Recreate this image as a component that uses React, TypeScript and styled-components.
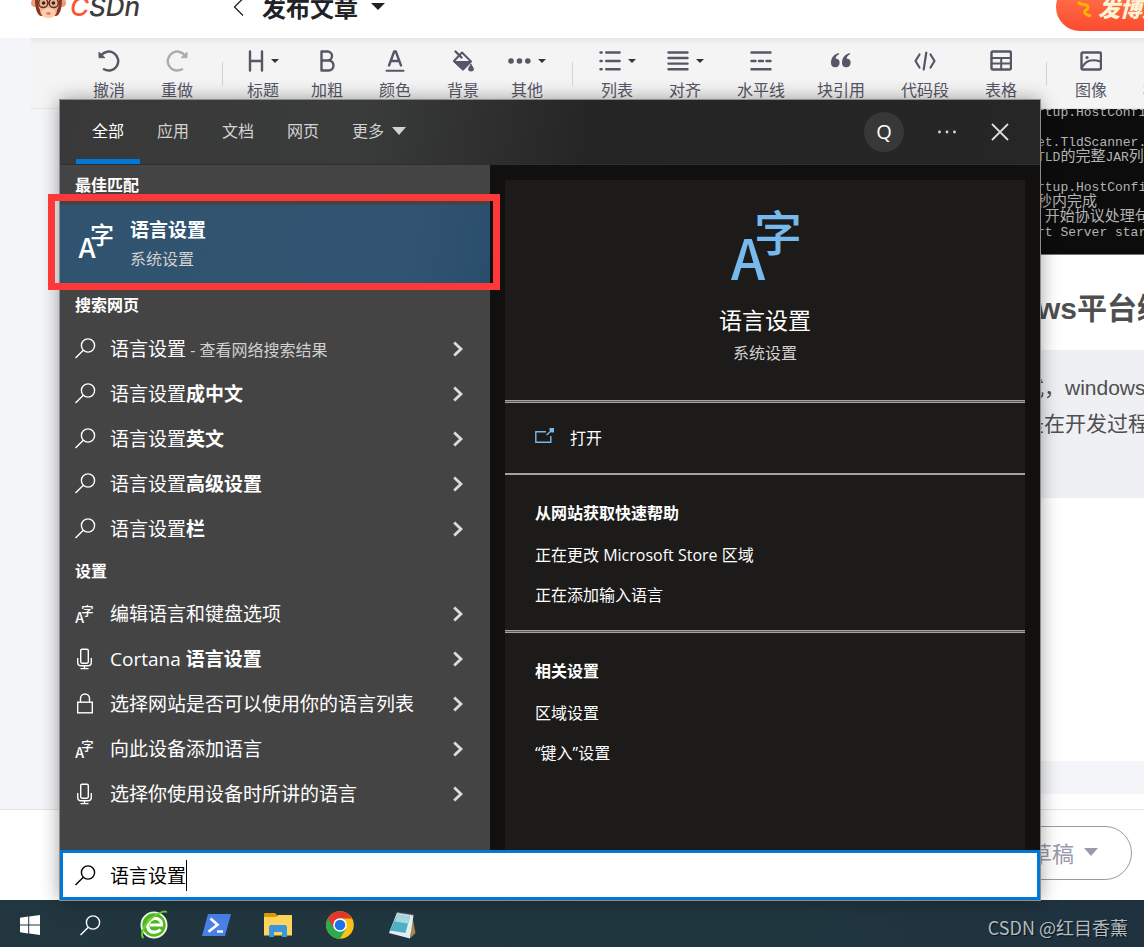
import React from "react";
import styled, { createGlobalStyle } from "styled-components";

const cjk = `"Noto Sans CJK SC", sans-serif`;
const ui = `"Open Sans", ${cjk}`;
const arial = `"Liberation Sans", ${cjk}`;

const GlobalStyle = createGlobalStyle`
  *, *::before, *::after { box-sizing: border-box; }
  body { margin: 0; font-family: ${ui}; background: #f4f5f8; }
  button { font: inherit; color: inherit; background: none; border: 0; padding: 0; margin: 0; text-align: left; cursor: pointer; }
  ul { list-style: none; margin: 0; padding: 0; }
  h1, h2, h3, p { margin: 0; }
  svg { display: block; flex: none; }
`;

/* ---------- page behind the search flyout ---------- */

const Desktop = styled.div`
  position: relative;
  display: flex;
  flex-direction: column;
  min-height: 100vh;
  overflow: hidden;
`;

const SiteHeader = styled.header`
  display: flex;
  align-items: center;
  height: 38px;
  padding: 0 0 25px 31px;
  background: #fff;
  overflow: hidden;
  flex: none;
`;

const Logo = styled.a`
  display: flex;
  align-items: center;
  gap: 4px;
  width: 202px;
  color: #3c3c3c;
  font: italic 500 26px/32px Inter, ${cjk};
  text-decoration: none;
`;

const LogoAccent = styled.span`
  color: #fc5531;
`;

const TitleMenu = styled.button`
  display: flex;
  align-items: center;
  gap: 13px;
  color: #222226;
  font: 700 24px/32px ${cjk};
`;

const BackButton = styled.button`
  width: 29px;
`;

const PromoButton = styled.button`
  display: flex;
  align-items: center;
  gap: 4px;
  flex: none;
  width: 160px;
  height: 48px;
  margin: 0 -72px 0 auto;
  padding-left: 20px;
  border-radius: 24px;
  background: linear-gradient(#ff7a4d, #fc4b30);
  color: #fff3d6;
  font: italic 900 22px/32px ${cjk};
  white-space: nowrap;
`;

const ToolbarRow = styled.div`
  margin-left: 31px;
  padding-left: 44px;
  height: 71px;
  display: flex;
  background: #f4f4f4;
  border-bottom: 1px solid #e4e5e8;
  box-shadow: inset 0 6px 6px -5px #dcdcdc;
  overflow: hidden;
  flex: none;
`;

const Tool = styled.button<{ $w: number; $off?: boolean }>`
  display: flex;
  flex-direction: column;
  align-items: center;
  flex: none;
  width: ${(p) => p.$w}px;
  padding-top: 11px;
  color: #555666;
  font: 400 16px/24px ${cjk};
  white-space: nowrap;
  svg { opacity: ${(p) => (p.$off ? 0.45 : 1)}; }
`;

const ToolIcon = styled.span`
  display: flex;
  align-items: center;
  gap: 7px;
  height: 24px;
  margin-bottom: 4px;
`;

const ToolDivider = styled.span<{ $w: number }>`
  display: flex;
  justify-content: center;
  flex: none;
  width: ${(p) => p.$w}px;
  padding-top: 24px;
  &::before { content: ""; width: 1px; height: 24px; background: #d4d4d6; }
`;

const Workspace = styled.main`
  flex: 1;
  display: flex;
  justify-content: flex-end;
`;

const Article = styled.article`
  display: flex;
  flex-direction: column;
  width: 121px;
  overflow: hidden;
  white-space: nowrap;
  background: #fff;
  color: #4f4f4f;
`;

const Console = styled.pre`
  margin: 0;
  height: 146px;
  padding-left: 14px;
  overflow: hidden;
  background: #0c0c0c;
  border-bottom: 1px solid #767676;
  color: #b4b4b4;
  font: 400 15px/15px "Liberation Mono", ${cjk};
`;

const ConsoleLine = styled.span<{ $first?: boolean }>`
  display: block;
  height: 15px;
  margin-top: ${(p) => (p.$first ? -4 : 0)}px;
`;

const Ascii = styled.span`
  font-size: 13px;
`;

const ArticleTitle = styled.h1`
  padding: 34px 0 21px 14px;
  font: 700 30px/40px ${arial};
`;

const Quote = styled.blockquote`
  margin: 0;
  height: 148px;
  padding: 20px 0;
  background: #eef0f4;
  font: 400 21px/36px ${arial};
`;

const StatusStrip = styled.div`
  margin-top: auto;
  height: 48px;
  border-bottom: 15px solid #fff;
  background: #f4f5f8;
`;

const PublishBar = styled.footer`
  display: flex;
  align-items: flex-start;
  justify-content: flex-end;
  height: 91px;
  padding: 16px 12px;
  background: #fff;
  border-top: 1px solid #e4e4e6;
  flex: none;
`;

const DraftButton = styled.button`
  display: flex;
  align-items: center;
  justify-content: flex-end;
  gap: 10px;
  width: 160px;
  height: 54px;
  padding: 0 33px 3px 0;
  border: 1px solid #999aaa;
  border-radius: 27px;
  color: #999aaa;
  font: 400 22px/32px ${cjk};
`;

/* ---------- search flyout ---------- */

const Flyout = styled.section`
  position: absolute;
  top: 100px;
  right: 104px;
  bottom: 47px;
  left: 60px;
  display: flex;
  flex-direction: column;
  background: #11100f;
  box-shadow: 0 0 0 1px #8d8d8d, 0 0 18px rgba(0, 0, 0, 0.4);
  color: #fff;
`;

const FlyoutHeader = styled.header`
  display: flex;
  align-items: center;
  height: 65px;
  padding: 0 30px 0 16px;
  background: linear-gradient(100deg, #393939 0, #3a3b3b 300px, #252525 530px, #262626 100%);
  border-bottom: 1px solid #303030;
  flex: none;
`;

const Tabs = styled.nav`
  display: flex;
  gap: 1px;
  align-self: stretch;
  flex: 1;
`;

const Tab = styled.button<{ $active?: boolean }>`
  display: flex;
  align-items: center;
  gap: 8px;
  padding: 2px 16px 0;
  border-bottom: 5px solid ${(p) => (p.$active ? "#0078d7" : "transparent")};
  color: ${(p) => (p.$active ? "#fff" : "#d2d2d2")};
  font-size: 16px;
  line-height: 24px;
`;

const Avatar = styled.button`
  width: 40px;
  height: 40px;
  border-radius: 50%;
  background: #383838;
  font-size: 20px;
  line-height: 40px;
  text-align: center;
`;

const HeaderButton = styled.button`
  display: grid;
  place-items: center;
  width: 20px;
  height: 40px;
  margin-left: 33px;
`;

const Columns = styled.div`
  display: flex;
  flex: 1;
  min-height: 0;
`;

const Results = styled.div`
  width: 430px;
  flex: none;
  background: #444;
`;

const GroupTitle = styled.h2`
  padding-left: 15px;
  font: 700 16px/40px ${ui};
`;

const BestMatch = styled.button`
  position: relative;
  display: flex;
  align-items: flex-start;
  gap: 17px;
  width: 100%;
  height: 80px;
  padding: 11px 0 0 18px;
  background: linear-gradient(100deg, #30536f 0, #315472 80%, #294e6c 100%);
`;

const MatchIcon = styled.span`
  padding-top: 7px;
`;

const Highlight = styled.span`
  position: absolute;
  inset: -11px -10px -5px -12px;
  border: 7px solid #fd3838;
`;

const MatchTitle = styled.span`
  display: block;
  margin-bottom: 3px;
  font: 700 19px/28px ${ui};
`;

const Muted = styled.span`
  color: #d0d0d0;
  font: 400 16px/24px ${ui};
`;

const ResultList = styled.ul`
  &:first-of-type { padding-top: 1px; }
`;

const Result = styled.button`
  display: flex;
  align-items: center;
  width: 100%;
  height: 45px;
  padding: 0 27px 0 15px;
  font: 400 19px/28px ${ui};
`;

const ResultIcon = styled.span`
  width: 35px;
`;

const ResultText = styled.span`
  flex: 1;
  white-space: pre;
`;

const Detail = styled.div`
  flex: 1;
  margin: 15px 15px 0;
  background: #1c1b1a;
`;

const Hero = styled.div`
  display: flex;
  flex-direction: column;
  align-items: center;
  height: 220px;
  padding-top: 30px;
`;

const HeroTitle = styled.h2`
  margin: 22px 0 3px;
  font: 400 23px/36px ${ui};
`;

const Rule = styled.hr<{ $double?: boolean }>`
  margin: 0;
  border: solid #a3a3a0;
  border-width: 1px 0;
  height: ${(p) => (p.$double ? 3 : 2)}px;
  background: #5c5c5a;
`;

const OpenAction = styled.button`
  display: flex;
  align-items: center;
  gap: 15px;
  width: 100%;
  height: 70px;
  padding-left: 30px;
  font-size: 16px;
  line-height: 24px;
`;

const LinkGroup = styled.section`
  padding: 26px 30px 15px;
`;

const LinkGroupTitle = styled.h3`
  margin-bottom: 10px;
  font: 700 16px/24px ${ui};
`;

const DetailLink = styled.a`
  display: block;
  color: #fff;
  font-size: 16px;
  line-height: 40px;
  text-decoration: none;
`;

const SearchBox = styled.label`
  display: flex;
  align-items: center;
  height: 50px;
  padding-left: 12px;
  border: 3px solid #0078d7;
  background: #fff;
  color: #000;
  flex: none;
`;

const SearchInput = styled.input`
  field-sizing: content;
  height: 32px;
  margin-left: 14px;
  padding: 0;
  border: 0;
  outline: 0;
  color: #000;
  font: 400 19px/28px ${ui};
`;

const Caret = styled.span`
  width: 1px;
  height: 31px;
  background: #000;
`;

/* ---------- taskbar ---------- */

const Taskbar = styled.nav`
  display: flex;
  height: 47px;
  background: linear-gradient(90deg, #21363f 0, #20363f 70%, #1f313f 100%);
  color: #fff;
  flex: none;
`;

const TaskButton = styled.button<{ $app?: boolean }>`
  display: grid;
  place-items: center;
  width: ${(p) => (p.$app ? 62 : 60)}px;
  padding-top: 3px;
`;

const Apps = styled.div`
  display: flex;
  margin-left: 3px;
`;

const Signature = styled.p`
  margin-left: auto;
  padding: 13px 16px 0 0;
  color: #b4bcc0;
  font: 400 18px/28px ${cjk};
  text-shadow: 1px 1px 1px #0a1418;
`;

/* ---------- icons ---------- */

const Triangle = ({ w, h, color = "currentColor" }: { w: number; h: number; color?: string }) => (
  <svg width={w} height={h} viewBox="0 0 14 8" preserveAspectRatio="none" fill={color} aria-hidden>
    <path d="M0 0h14L7 8z" />
  </svg>
);

const LanguageIcon = ({ size, color = "#fff" }: { size: number; color?: string }) => (
  <svg width={size} height={size} viewBox="0 0 70 70" fill={color} overflow="visible" aria-hidden>
    <text x="1" y="70" fontFamily="Noto Sans CJK SC" fontSize="55" fontWeight="500">A</text>
    <text x="24" y="41" fontFamily="Noto Sans CJK SC" fontSize="48" fontWeight="500">字</text>
  </svg>
);

const SearchIcon = () => (
  <svg width="21" height="21" viewBox="0 0 21 21" fill="none" stroke="currentColor" strokeWidth="1.4" aria-hidden>
    <circle cx="13" cy="7.500" r="6.600" />
    <path d="M8.300 12.200L.5 20" />
  </svg>
);

const MicIcon = () => (
  <svg width="20" height="22" viewBox="0 0 20 22" fill="none" stroke="#fff" strokeWidth="1.4" aria-hidden>
    <rect x="5.700" y="1.200" width="7.600" height="14" rx="1.400" />
    <path d="M2.700 10v4.200q0 3.600 3.600 3.600h6.400q3.600 0 3.600-3.600V10M9.500 18v2.600M5.500 20.600h8" />
  </svg>
);

const LockIcon = () => (
  <svg width="20" height="22" viewBox="0 0 20 22" fill="none" stroke="#fff" strokeWidth="1.4" aria-hidden>
    <rect x="2.700" y="9.200" width="14.600" height="10.600" />
    <path d="M5.500 9V5.500a4.500 4.500 0 0 1 9 0v3.500" />
  </svg>
);

const Chevron = () => (
  <svg width="10" height="16" viewBox="0 0 10 16" fill="none" stroke="#dcdcdc" strokeWidth="2.8" aria-hidden>
    <path d="M1.200 1.400L8 8l-6.800 6.600" />
  </svg>
);

const OpenIcon = () => (
  <svg width="20" height="16" viewBox="0 2 20 16" overflow="visible" fill="none" stroke="#76b9ed" strokeWidth="1.4" aria-hidden>
    <path d="M11 3.700H.8v10.600h15V8M11.600 7l5-4.600" />
    <path d="M14.500 0H19v4.500h-2.400L14.500 2.500z" fill="#76b9ed" stroke="none" />
  </svg>
);

const Monkey = () => (
  <svg width="35" height="38" viewBox="0 7 35 38" aria-hidden>
    <circle cx="4" cy="22" r="4" fill="#e9a07a" />
    <circle cx="31" cy="22" r="4" fill="#e9a07a" />
    <path d="M4 17C4 6 10 1 17.500 1S31 6 31 17c0 11-2 17-6 18H10c-4-1-6-7-6-18z" fill="#8b3220" />
    <path d="M7 19c0-6 5-8 10.500-6C23 11 28 13 28 19c0 3 0 7-2 10 0 5-4 8-8.500 8S9 34 9 29c-2-3-2-7-2-10z" fill="#f2b58e" />
    <ellipse cx="17.500" cy="32" rx="7" ry="5" fill="#fbcfae" />
    <g fill="#e8b090" stroke="#5d3427" strokeWidth="1.500">
      <circle cx="12.200" cy="22" r="4.600" />
      <circle cx="22.800" cy="22" r="4.600" />
    </g>
    <path d="M16.800 22h1.400" stroke="#5d3427" strokeWidth="1.500" />
    <circle cx="12.600" cy="22" r="1.800" fill="#3a201a" />
    <circle cx="22.400" cy="22" r="1.800" fill="#3a201a" />
    <ellipse cx="17.500" cy="32.500" rx="2.200" ry="1.200" fill="#e8676a" />
  </svg>
);

const Glyph = ({ children, w = 22 }: { children: React.ReactNode; w?: number }) => (
  <svg
    width={w}
    height="22"
    viewBox={`0 0 ${w} 22`}
    fill="none"
    stroke="currentColor"
    strokeWidth="2.4"
    strokeLinecap="round"
    strokeLinejoin="round"
    aria-hidden
  >
    {children}
  </svg>
);

const icons: Record<string, React.ReactNode> = {
  undo: <Glyph><path d="M3 5.500A9.500 9.500 0 1 1 6 19.300" /><path d="M1 2.500v5.200h5.500z" fill="currentColor" strokeWidth="1" /></Glyph>,
  redo: <Glyph><path d="M19 5.500A9.500 9.500 0 1 0 16 19.300" /><path d="M21 2.500v5.200h-5.500z" fill="currentColor" strokeWidth="1" /></Glyph>,
  heading: <Glyph w={16}><path d="M2 1.500v19M14 1.500v19M2 11h12" /></Glyph>,
  bold: <Glyph w={16}><path d="M2.500 1.500h6a4.500 4.500 0 0 1 0 9h-6zM2.500 10.500h7a5 5 0 0 1 0 10h-7z" /></Glyph>,
  color: <Glyph w={20}><path d="M4 15.500L9.200 1.500h1.600L16 15.500M6 11h8" /><path d="M1.500 20.800h17" strokeWidth="2" /></Glyph>,
  fill: (
    <Glyph>
      <path d="M3.500 1.500l6 6" />
      <path d="M10 2.500l9 9-8 8L2 11z" strokeWidth="2" />
      <path d="M2 11.500h17l-8 8z" fill="currentColor" strokeWidth="1" />
      <path d="M19 14.500q5 6.500 0 6.500t0-6.500z" fill="currentColor" strokeWidth="1" />
    </Glyph>
  ),
  more: <Glyph w={23}><g fill="currentColor" stroke="none"><circle cx="3" cy="11" r="2.800" /><circle cx="11.500" cy="11" r="2.800" /><circle cx="19.800" cy="11" r="2.800" /></g></Glyph>,
  list: <Glyph><path d="M7.200 2.500h13.400M7.200 11h13.400M7.200 19.300h13.400M1.500 2.500h1.200M1.500 11h1.200M1.500 19.300h1.200" /></Glyph>,
  align: <Glyph><path d="M1.500 2.500h19M1.500 8h19M1.500 13.600h19M1.500 19.300h19" /></Glyph>,
  rule: <Glyph><path d="M1.500 2.500h19M1.500 19.300h19M1.500 11h4M9 11h4M16.500 11h4" /></Glyph>,
  quote: (
    <Glyph>
      <g fill="currentColor" stroke="none">
        <path d="M8.600 3C3.500 4.500 1 8 1 13a4.300 4.300 0 1 0 4.600-4.400C5.800 6.500 7 5.200 9.300 4z" />
        <path d="M19.600 3C14.500 4.500 12 8 12 13a4.300 4.300 0 1 0 4.600-4.400c.2-2.100 1.400-3.400 3.700-4.600z" />
      </g>
    </Glyph>
  ),
  code: <Glyph><path d="M5.500 4.500L1.500 11l4 6.500M16.500 4.500l4 6.500-4 6.500M12.300 2.500L9.700 19.500" strokeWidth="2.200" /></Glyph>,
  table: <Glyph><rect x="1.500" y="1.500" width="19.500" height="18" rx="1.500" /><path d="M1.500 8h19.500M1.500 13.500h19.500M11.200 8v11" strokeWidth="2" /></Glyph>,
  image: <Glyph><rect x="1.500" y="2.500" width="19.500" height="17" rx="1.500" /><path d="M2 17.500c4-7 9-9 18.500-6" strokeWidth="2" /><circle cx="7" cy="7.500" r="1.600" fill="currentColor" stroke="none" /></Glyph>,
  template: <Glyph><rect x="1.500" y="2.500" width="19.500" height="17" rx="1.500" /></Glyph>,
};

const WindowsIcon = () => (
  <svg width="20" height="20" viewBox="0 0 20 20" fill="#fff" aria-hidden>
    <path d="M0 2.800l8.200-1.200v7.900H0zM9.200 1.400L20 0v9.500H9.200zM0 10.500h8.200v7.900L0 17.200zM9.200 10.500H20V20L9.200 18.500z" />
  </svg>
);

const BrowserIcon = () => (
  <svg width="30" height="30" viewBox="0 0 30 30" fill="none" aria-hidden>
    <circle cx="15" cy="15" r="12.600" fill="#4fb81f" stroke="#f4faf0" strokeWidth="1.800" />
    <path d="M21.500 19.500c-2.500 3-9 4-11.500.5-3-4.500-.5-10.500 5-11.500 4.500-.5 7.800 2 7.500 6.500H11" stroke="#fff" strokeWidth="3.200" />
    <path d="M4.500 28C0 24 7 11 17 5c6-3.600 10-4.500 10.500-2.500" stroke="#6bd12f" strokeWidth="2" />
  </svg>
);

const PowerShellIcon = () => (
  <svg width="29" height="22" viewBox="0 0 29 22" fill="none" aria-hidden>
    <path d="M6 0h23l-6 22H0z" fill="#4a7fe8" />
    <path d="M8.500 4.500l7 6.200-9 7" stroke="#fff" strokeWidth="2.600" />
    <path d="M15 17.500h6" stroke="#fff" strokeWidth="2.400" />
  </svg>
);

const FolderIcon = () => (
  <svg width="28" height="24" viewBox="0 0 28 24" aria-hidden>
    <path d="M0 1.200Q0 0 1.200 0H11l3 3v4H0z" fill="#e09c07" />
    <path d="M0 4h12l2.500-2H28v20.500H0z" fill="#ffd45e" />
    <path d="M5 24V14q0-2 2-2h14q2 0 2 2v10h-5v-5h-8v5z" fill="#3a96dd" />
  </svg>
);

const ChromeIcon = () => (
  <svg width="28" height="28" viewBox="0 0 28 28" aria-hidden>
    <circle cx="14" cy="14" r="13.800" fill="#fbc116" />
    <path d="M14 14L1.900 7.200A13.800 13.800 0 0 0 14 27.800L20 17.500z" fill="#2da94f" />
    <path d="M1.900 7.200A13.800 13.800 0 0 1 26.100 7.500H14L8.200 18z" fill="#e33b2e" />
    <circle cx="14" cy="14" r="6.800" fill="#fff" />
    <circle cx="14" cy="14" r="5.300" fill="#1a73e8" />
  </svg>
);

const NotepadIcon = () => (
  <svg width="28" height="28" viewBox="0 0 28 28" aria-hidden>
    <path d="M24 4l3.500 18-5 5z" fill="#a9864b" />
    <path d="M9 1.500L25.500 4 22 27.500 1 22z" fill="#e4eef2" />
    <path d="M9.500 3.500L22 5.500 17.500 22 1.500 19.500z" fill="#4fb0c4" />
    <path d="M9.500 3.500L22 5.500l-2 7-13-2z" fill="#a6d9e2" />
    <path d="M10 1.500l14.500 2.300" stroke="#55666d" strokeWidth="1.600" strokeDasharray="1.500 1.200" />
  </svg>
);

/* ---------- data ---------- */

type ToolSpec = { icon: string; label: string; w: number; menu?: boolean; off?: boolean };

const toolGroups: { gap: number; tools: ToolSpec[] }[] = [
  { gap: 0, tools: [{ icon: "undo", label: "撤消", w: 68 }, { icon: "redo", label: "重做", w: 68, off: true }] },
  {
    gap: 22,
    tools: [
      { icon: "heading", label: "标题", w: 60, menu: true },
      { icon: "bold", label: "加粗", w: 68 },
      { icon: "color", label: "颜色", w: 68 },
      { icon: "fill", label: "背景", w: 68 },
      { icon: "more", label: "其他", w: 60, menu: true },
    ],
  },
  {
    gap: 30,
    tools: [
      { icon: "list", label: "列表", w: 60, menu: true },
      { icon: "align", label: "对齐", w: 76, menu: true },
      { icon: "rule", label: "水平线", w: 76 },
      { icon: "quote", label: "块引用", w: 84 },
      { icon: "code", label: "代码段", w: 84 },
      { icon: "table", label: "表格", w: 68 },
    ],
  },
  { gap: 22, tools: [{ icon: "image", label: "图像", w: 68 }, { icon: "template", label: "模板", w: 68 }] },
];

type ResultSpec = { icon: React.ReactNode; text: string; strong?: string; note?: string };

const webResults: ResultSpec[] = [
  { icon: <SearchIcon />, text: "语言设置", note: " - 查看网络搜索结果" },
  { icon: <SearchIcon />, text: "语言设置", strong: "成中文" },
  { icon: <SearchIcon />, text: "语言设置", strong: "英文" },
  { icon: <SearchIcon />, text: "语言设置", strong: "高级设置" },
  { icon: <SearchIcon />, text: "语言设置", strong: "栏" },
];

const settingResults: ResultSpec[] = [
  { icon: <LanguageIcon size={18} />, text: "编辑语言和键盘选项" },
  { icon: <MicIcon />, text: "Cortana ", strong: "语言设置" },
  { icon: <LockIcon />, text: "选择网站是否可以使用你的语言列表" },
  { icon: <LanguageIcon size={18} />, text: "向此设备添加语言" },
  { icon: <MicIcon />, text: "选择你使用设备时所讲的语言" },
];

const ResultGroup = ({ title, items }: { title: string; items: ResultSpec[] }) => (
  <>
    <GroupTitle>{title}</GroupTitle>
    <ResultList>
      {items.map((r, i) => (
        <li key={i}>
          <Result>
            <ResultIcon>{r.icon}</ResultIcon>
            <ResultText>
              {r.text}
              {r.strong && <b>{r.strong}</b>}
              {r.note && <Muted>{r.note}</Muted>}
            </ResultText>
            <Chevron />
          </Result>
        </li>
      ))}
    </ResultList>
  </>
);

export default function App() {
  return (
    <>
      <GlobalStyle />
      <Desktop>
        <SiteHeader>
          <Logo href="#">
            <Monkey />
            <span><LogoAccent>C</LogoAccent>SDn</span>
          </Logo>
          <BackButton aria-label="返回">
            <svg width="11" height="18" viewBox="0 0 11 18" fill="none" stroke="#222226" strokeWidth="1.300">
              <path d="M10 .5L1.500 9l8.500 8.500" />
            </svg>
          </BackButton>
          <TitleMenu>发布文章<Triangle w={14} h={7} /></TitleMenu>
          <PromoButton>
            <svg width="18" height="26" viewBox="0 0 18 26" fill="none" stroke="#ffb400" strokeWidth="3">
              <path d="M2 8c2 4 10 1 10 5s-5 3-3 6 4 2 6 3" />
            </svg>
            发博文
          </PromoButton>
        </SiteHeader>

        <ToolbarRow>
          {toolGroups.map((g, i) => (
            <React.Fragment key={i}>
              {g.gap > 0 && <ToolDivider $w={g.gap} />}
              {g.tools.map((t) => (
                <Tool key={t.label} $w={t.w} $off={t.off}>
                  <ToolIcon>
                    {icons[t.icon]}
                    {t.menu && <Triangle w={8} h={4} color="#333" />}
                  </ToolIcon>
                  {t.label}
                </Tool>
              ))}
            </React.Fragment>
          ))}
        </ToolbarRow>

        <Workspace>
          <Article>
            <Console>
              <ConsoleLine $first><Ascii>rtup.HostConfig</Ascii></ConsoleLine>
              <ConsoleLine />
              <ConsoleLine><Ascii>et.TldScanner.s</Ascii></ConsoleLine>
              <ConsoleLine><Ascii>TLD</Ascii>的完整<Ascii>JAR</Ascii>列表</ConsoleLine>
              <ConsoleLine />
              <ConsoleLine><Ascii>rtup.HostConfig</Ascii></ConsoleLine>
              <ConsoleLine>秒内完成</ConsoleLine>
              <ConsoleLine><Ascii> </Ascii>开始协议处理句</ConsoleLine>
              <ConsoleLine><Ascii>rt Server start</Ascii></ConsoleLine>
            </Console>
            <ArticleTitle>ws平台编</ArticleTitle>
            <Quote>
              式，windows
              <br />
              是在开发过程
            </Quote>
            <StatusStrip />
          </Article>
        </Workspace>

        <PublishBar>
          <DraftButton>草稿<Triangle w={14} h={8} /></DraftButton>
        </PublishBar>

        <Taskbar>
          <TaskButton aria-label="开始"><WindowsIcon /></TaskButton>
          <TaskButton aria-label="搜索"><SearchIcon /></TaskButton>
          <Apps>
            <TaskButton $app aria-label="浏览器"><BrowserIcon /></TaskButton>
            <TaskButton $app aria-label="PowerShell"><PowerShellIcon /></TaskButton>
            <TaskButton $app aria-label="文件资源管理器"><FolderIcon /></TaskButton>
            <TaskButton $app aria-label="Chrome"><ChromeIcon /></TaskButton>
            <TaskButton $app aria-label="记事本"><NotepadIcon /></TaskButton>
          </Apps>
          <Signature>CSDN @红目香薰</Signature>
        </Taskbar>

        <Flyout>
          <FlyoutHeader>
            <Tabs>
              <Tab $active>全部</Tab>
              <Tab>应用</Tab>
              <Tab>文档</Tab>
              <Tab>网页</Tab>
              <Tab>更多<Triangle w={14} h={8} /></Tab>
            </Tabs>
            <Avatar>Q</Avatar>
            <HeaderButton aria-label="选项">
              <svg width="20" height="4" viewBox="0 0 20 4" fill="#dcdcdc">
                <circle cx="2.500" cy="2" r="1.400" /><circle cx="10" cy="2" r="1.400" /><circle cx="17.500" cy="2" r="1.400" />
              </svg>
            </HeaderButton>
            <HeaderButton aria-label="关闭">
              <svg width="18" height="18" viewBox="0 0 18 18" stroke="#dcdcdc" strokeWidth="1.800">
                <path d="M1 1l16 16M17 1L1 17" />
              </svg>
            </HeaderButton>
          </FlyoutHeader>

          <Columns>
            <Results>
              <GroupTitle>最佳匹配</GroupTitle>
              <BestMatch>
                <MatchIcon><LanguageIcon size={35} /></MatchIcon>
                <span>
                  <MatchTitle>语言设置</MatchTitle>
                  <Muted>系统设置</Muted>
                </span>
                <Highlight />
              </BestMatch>
              <ResultGroup title="搜索网页" items={webResults} />
              <ResultGroup title="设置" items={settingResults} />
            </Results>

            <Detail>
              <Hero>
                <LanguageIcon size={70} color="#76b9ed" />
                <HeroTitle>语言设置</HeroTitle>
                <Muted>系统设置</Muted>
              </Hero>
              <Rule $double />
              <OpenAction><OpenIcon />打开</OpenAction>
              <Rule />
              <LinkGroup>
                <LinkGroupTitle>从网站获取快速帮助</LinkGroupTitle>
                <DetailLink href="#">正在更改 Microsoft Store 区域</DetailLink>
                <DetailLink href="#">正在添加输入语言</DetailLink>
              </LinkGroup>
              <Rule $double />
              <LinkGroup>
                <LinkGroupTitle>相关设置</LinkGroupTitle>
                <DetailLink href="#">区域设置</DetailLink>
                <DetailLink href="#">“键入”设置</DetailLink>
              </LinkGroup>
            </Detail>
          </Columns>

          <SearchBox>
            <SearchIcon />
            <SearchInput type="text" aria-label="搜索" defaultValue="语言设置" />
            <Caret />
          </SearchBox>
        </Flyout>
      </Desktop>
    </>
  );
}
